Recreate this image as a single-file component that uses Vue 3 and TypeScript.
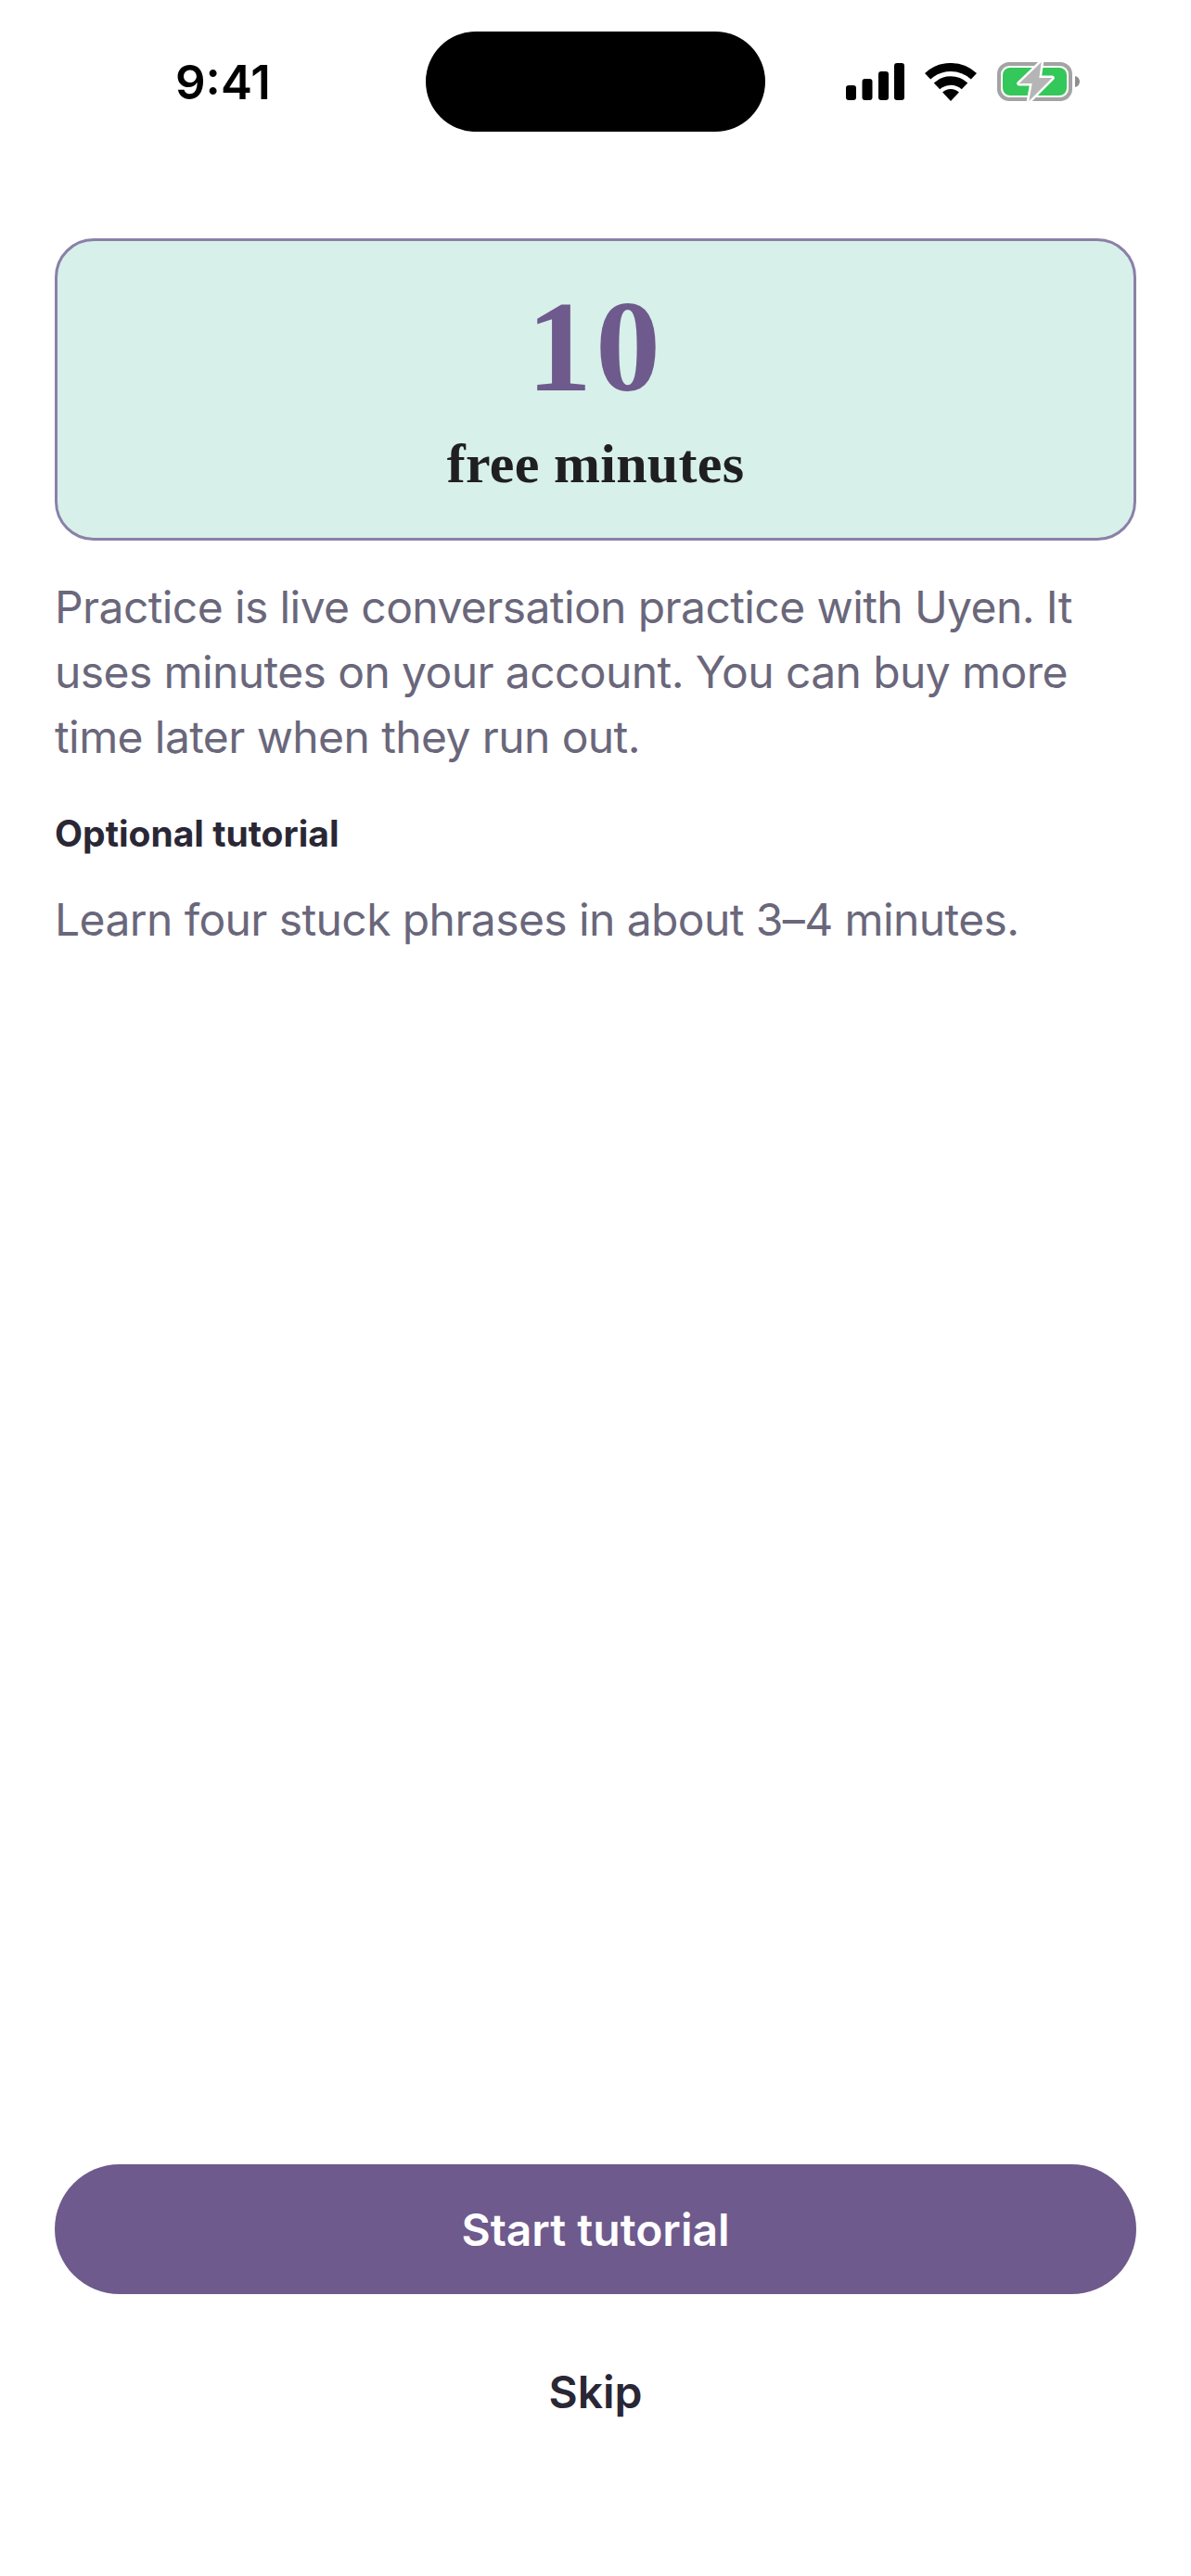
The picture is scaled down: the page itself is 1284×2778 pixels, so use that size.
<template>
  <div class="screen">
    <header class="status-bar">
      <div class="time">9:41</div>
      <div class="island"></div>
      <div class="status-icons">
        <svg class="signal" width="63" height="40" viewBox="0 0 63 40">
          <rect v-for="bar in signalBars" :key="bar.x" :x="bar.x" :y="40 - bar.h" width="11" :height="bar.h" rx="3" />
        </svg>
        <svg class="wifi" width="56" height="41" viewBox="0 0 56 41">
          <path d="M3.1 14.3A36.5 36.5 0 0 1 52.9 14.3" fill="none" stroke="#000" stroke-width="9" />
          <path d="M13 24.9A22 22 0 0 1 43 24.9" fill="none" stroke="#000" stroke-width="9.5" />
          <path d="M28 41L19.1 31.5A13 13 0 0 1 36.9 31.5Z" />
        </svg>
        <svg class="battery" width="90" height="44" viewBox="0 0 90 44">
          <rect x="2" y="3" width="77" height="38" rx="11" fill="none" stroke="#a3a3a3" stroke-width="4" />
          <rect x="6" y="7" width="69" height="30" rx="8" fill="#34c759" />
          <path d="M84 16c3 .6 5 3 5 6s-2 5.400-5 6z" fill="#8e8e8e" />
          <path d="M47.700 1L23.700 24H37.700L34.300 43L59.300 18H45.300Z" fill="#b5b5b5" stroke="#fff" stroke-width="5" stroke-linejoin="round" paint-order="stroke" />
        </svg>
      </div>
    </header>

    <main class="content">
      <section class="minutes-card">
        <div class="minutes-number">10</div>
        <div class="minutes-label">free minutes</div>
      </section>
      <p class="body-text intro">
        Practice is live conversation practice with Uyen. It uses minutes on your account. You can buy more time later when they run out.
      </p>
      <h2 class="section-title">Optional tutorial</h2>
      <p class="body-text">Learn four stuck phrases in about 3–4 minutes.</p>
    </main>

    <footer class="actions">
      <button class="btn-primary">Start tutorial</button>
      <button class="btn-skip">Skip</button>
    </footer>
  </div>
</template>

<script setup lang="ts">
const signalBars = [
  { x: 0, h: 16 },
  { x: 17.500, h: 23 },
  { x: 35, h: 31 },
  { x: 52, h: 40 }
]
</script>

<style>
body {
  background: #fff;
}
</style>

<style scoped>
.screen {
  width: 1284px;
  height: 2778px;
  display: flex;
  flex-direction: column;
  background: #fff;
  font-family: Inter, "Noto Sans", sans-serif;
  overflow: hidden;
}

.status-bar {
  height: 177px;
  flex-shrink: 0;
  padding-top: 34px;
  box-sizing: border-box;
  display: grid;
  grid-template-columns: 459px 366px 1fr;
  align-items: start;
}

.time {
  height: 108px;
  line-height: 110px;
  padding-left: 189px;
  font-size: 51px;
  font-weight: 600;
  color: #000;
}

.island {
  height: 108px;
  background: #000;
  border-radius: 54px;
}

.status-icons {
  display: flex;
  align-items: center;
  height: 108px;
  padding-left: 87px;
}

.wifi {
  margin-left: 22px;
}

.battery {
  margin-left: 22px;
}

.content {
  padding: 80px 59px 0;
  flex: 1;
}

.minutes-card {
  height: 326px;
  box-sizing: border-box;
  border: 3px solid #8b80a8;
  border-radius: 42px;
  background: #d7f0e9;
  text-align: center;
  font-family: "Liberation Serif", serif;
  font-weight: 700;
  padding-top: 44px;
}

.minutes-number {
  font-size: 140px;
  line-height: 140px;
  letter-spacing: 4px;
  color: #6e5a8c;
}

.minutes-label {
  margin-top: 21px;
  font-size: 60px;
  line-height: 70px;
  letter-spacing: 0.3px;
  color: #1f1f22;
}

.body-text {
  margin: 0;
  font-size: 48px;
  line-height: 70px;
  letter-spacing: -0.6px;
  color: #6a677b;
}

.intro {
  margin-top: 37px;
}

.section-title {
  margin: 44px 0 33px;
  font-size: 39px;
  line-height: 50px;
  font-weight: 700;
  color: #2a2735;
}

.actions {
  padding: 0 59px 164px;
  display: flex;
  flex-direction: column;
}

.btn-primary {
  height: 140px;
  border: 0;
  border-radius: 70px;
  background: #6e5a8c;
  color: #fff;
  font: 600 48px Inter, sans-serif;
}

.btn-skip {
  height: 70px;
  margin-top: 70px;
  border: 0;
  background: none;
  color: #2a2735;
  font: 600 48px Inter, sans-serif;
}
</style>
